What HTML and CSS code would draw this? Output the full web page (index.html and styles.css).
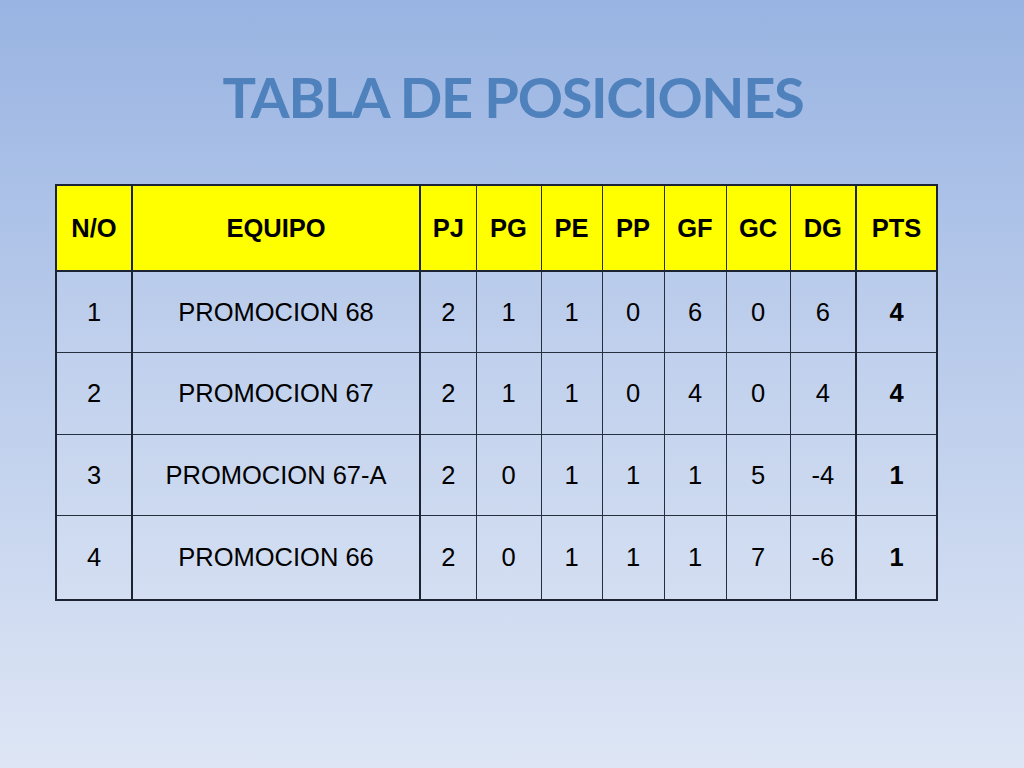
FILE: index.html
```html
<!DOCTYPE html>
<html lang="es">
<head>
<meta charset="utf-8">
<title>Tabla de posiciones</title>
<link rel="stylesheet" href="styles.css">
</head>
<body>
<div class="slide">
  <h1 class="title">TABLA DE POSICIONES</h1>
  <table class="standings">
    <colgroup>
      <col class="c-no"><col class="c-team"><col class="c-pj"><col class="c-pg"><col class="c-pe">
      <col class="c-pp"><col class="c-gf"><col class="c-gc"><col class="c-dg"><col class="c-pts">
    </colgroup>
    <thead>
      <tr class="head">
        <th class="thick-r">N/O</th><th class="thick-r">EQUIPO</th><th>PJ</th><th>PG</th><th>PE</th><th>PP</th><th>GF</th><th>GC</th><th class="thick-r">DG</th><th>PTS</th>
      </tr>
    </thead>
    <tbody>
      <tr class="r1">
        <td class="thick-r">1</td><td class="thick-r">PROMOCION 68</td><td>2</td><td>1</td><td>1</td><td>0</td><td>6</td><td>0</td><td class="thick-r">6</td><td class="pts">4</td>
      </tr>
      <tr class="r2">
        <td class="thick-r">2</td><td class="thick-r">PROMOCION 67</td><td>2</td><td>1</td><td>1</td><td>0</td><td>4</td><td>0</td><td class="thick-r">4</td><td class="pts">4</td>
      </tr>
      <tr class="r3">
        <td class="thick-r">3</td><td class="thick-r">PROMOCION 67-A</td><td>2</td><td>0</td><td>1</td><td>1</td><td>1</td><td>5</td><td class="thick-r">-4</td><td class="pts">1</td>
      </tr>
      <tr class="r4">
        <td class="thick-r">4</td><td class="thick-r">PROMOCION 66</td><td>2</td><td>0</td><td>1</td><td>1</td><td>1</td><td>7</td><td class="thick-r">-6</td><td class="pts">1</td>
      </tr>
    </tbody>
  </table>
</div>
</body>
</html>
```

FILE: styles.css
```css
html, body {
  margin: 0;
  padding: 0;
}

body {
  width: 1024px;
  height: 768px;
  overflow: hidden;
  background: linear-gradient(to bottom, #99b4e2 0%, #b9cbeb 45%, #dee6f5 100%);
}

.slide {
  display: flex;
  flex-direction: column;
  align-items: flex-start;
  padding-top: 65px;
}

.title {
  align-self: center;
  margin: 0 0 0 2px;
  font-family: Lato, "Open Sans", sans-serif;
  font-weight: 700;
  font-size: 56px;
  line-height: 64px;
  letter-spacing: -1.3px;
  color: #4f81bd;
}

.standings {
  margin: 55px 0 0 55px;
  border-collapse: collapse;
  table-layout: fixed;
  width: 881px;
  font-family: "Liberation Sans", Arial, sans-serif;
  font-size: 25.5px;
  color: #000;
  border: 2px solid #1c2433;
}

.c-no { width: 76px; }
.c-team { width: 288px; }
.c-pj { width: 56px; }
.c-pg { width: 65px; }
.c-pe { width: 61px; }
.c-pp { width: 62px; }
.c-gf { width: 62px; }
.c-gc { width: 64px; }
.c-dg { width: 66px; }
.c-pts { width: 81px; }

.standings th,
.standings td {
  border: 1px solid #262f40;
  text-align: center;
  vertical-align: middle;
  padding: 0;
}

.standings th {
  background: #ffff00;
  font-weight: 700;
  height: 84px;
  border-bottom: 2px solid #1c2433;
}

.standings td {
  background: rgba(255, 255, 255, 0.1);
  font-weight: 400;
}

.standings .thick-r {
  border-right: 2px solid #1c2433;
}

.r1 td { height: 80px; }
.r2 td { height: 81px; }
.r3 td { height: 80px; }
.r4 td { height: 83px; }

.standings td.pts {
  font-weight: 700;
}
```
